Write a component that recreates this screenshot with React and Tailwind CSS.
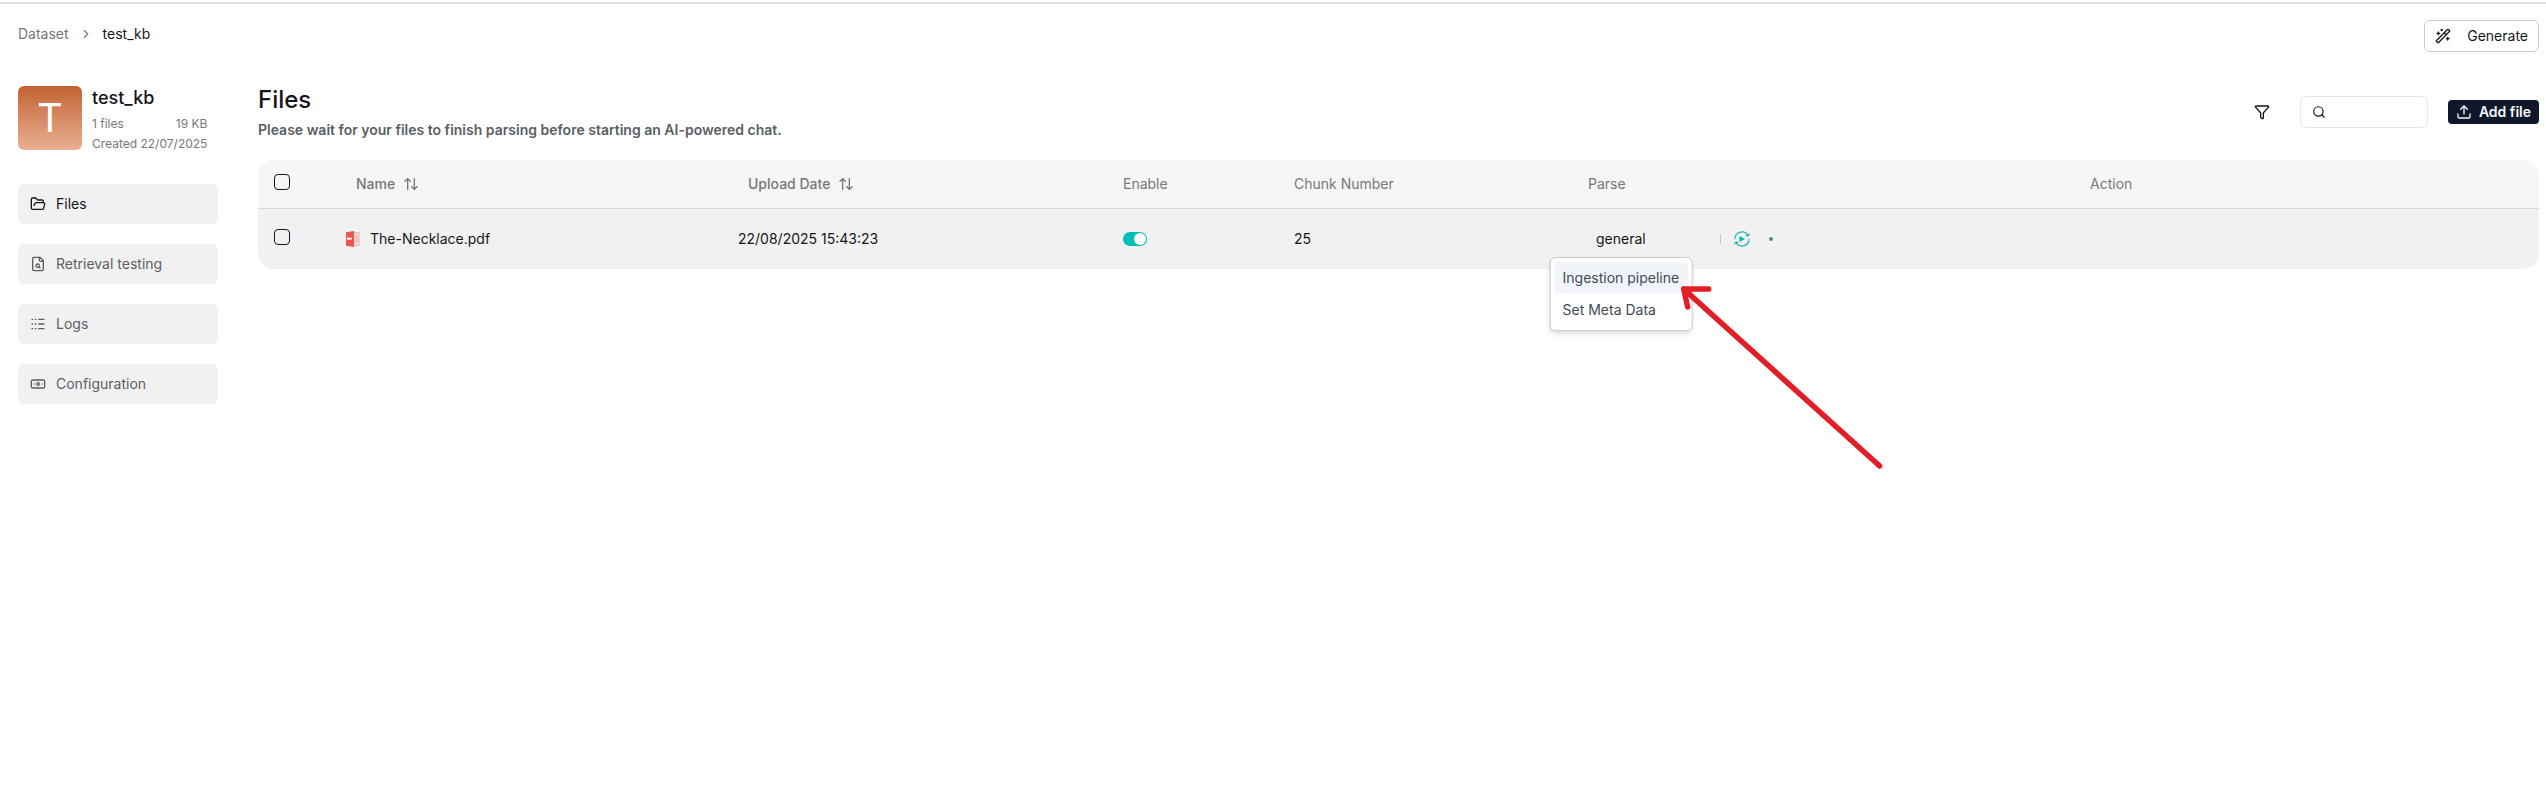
import React, { useState } from "react";
import {
  ArrowUpDown,
  Banknote,
  ChevronRight,
  FolderOpen,
  Funnel,
  Logs,
  Search,
  Upload,
  WandSparkles,
} from "lucide-react";

function FileSearchIcon({ className }) {
  return (
    <svg
      className={className}
      viewBox="0 0 24 24"
      fill="none"
      stroke="currentColor"
      strokeWidth="2"
      strokeLinecap="round"
      strokeLinejoin="round"
    >
      <path d="M15 2H6a2 2 0 0 0-2 2v16a2 2 0 0 0 2 2h12a2 2 0 0 0 2-2V7z" />
      <path d="M14 2v4a2 2 0 0 0 2 2h4" />
      <circle cx="11.5" cy="14.500" r="2.500" />
      <path d="M13.300 16.300 15 18" />
    </svg>
  );
}

const NAV = [
  { label: "Files", icon: FolderOpen, active: true },
  { label: "Retrieval testing", icon: FileSearchIcon },
  { label: "Logs", icon: Logs },
  { label: "Configuration", icon: Banknote },
];

function Checkbox({ label }) {
  return (
    <input
      type="checkbox"
      aria-label={label}
      className="block size-4 appearance-none rounded-sm border border-[#0f172a] checked:bg-[#0f172a]"
    />
  );
}

function SortHeader({ children }) {
  return (
    <button type="button" className="flex items-center gap-2 px-[10px] font-medium">
      {children}
      <ArrowUpDown className="size-4" />
    </button>
  );
}

function Toggle() {
  const [on, setOn] = useState(true);
  return (
    <label className="flex h-[14px] w-6 cursor-pointer items-center rounded-full bg-[#c4c4c4] p-px has-checked:justify-end has-checked:bg-[#00beb4]">
      <input
        type="checkbox"
        role="switch"
        aria-label="Enable"
        checked={on}
        onChange={() => setOn(!on)}
        className="size-3 appearance-none rounded-full bg-white"
      />
    </label>
  );
}

function PdfIcon() {
  return (
    <svg className="h-4 w-[14px] shrink-0" viewBox="0 0 14 16" fill="none">
      <path d="M8 1.500h5v13H8" fill="#fbdcda" stroke="#f5aeaa" />
      <path d="M9.500 5h1.500v5M9.500 10.500h2.500" stroke="#f3a5a1" />
      <path d="M0 1.200 8 0v16L0 14.800z" fill="#f0524c" />
      <path d="M1 6.500h2.500l1 .8L6 6.500v2l-1.500-.3-1 .8L1 8.300z" fill="#fff" />
    </svg>
  );
}

function ReparseIcon() {
  return (
    <svg
      className="size-4"
      viewBox="0 0 16 16"
      fill="none"
      stroke="#1fb5ad"
      strokeWidth="1.200"
      strokeLinecap="round"
      strokeLinejoin="round"
    >
      <path d="M.9 7.600A7.100 7.100 0 0 1 14.100 4.500M15.300 3.200l-1.200 1.600-1.900-.5" />
      <path d="M15.100 8.400A7.100 7.100 0 0 1 1.900 11.500M.7 12.800l1.200-1.600 1.900.5" />
      <path d="M5.500 5v6L11 8z" fill="#00b8ae" stroke="none" />
    </svg>
  );
}

function Arrow() {
  return (
    <svg
      className="pointer-events-none absolute top-full left-full -mt-12 -ml-4 h-[188px] w-[208px]"
      viewBox="0 0 208 188"
      fill="none"
      stroke="#e41e26"
      strokeWidth="5.500"
      strokeLinecap="round"
      strokeLinejoin="round"
    >
      <path d="M203 183 7 6M32 6H7l4 18" />
    </svg>
  );
}

function ParseMenu() {
  return (
    <div className="relative">
      <button type="button" className="h-7 px-2">
        general
      </button>
      <div className="absolute top-full left-1/2 z-10 mt-1 -translate-x-1/2">
        <div
          role="menu"
          className="flex flex-col rounded-md border border-[#cbcbcd] bg-white p-1 text-[#434a57] shadow-md"
        >
          <button
            type="button"
            role="menuitem"
            className="rounded-sm bg-[#f1f5f9] px-2 py-1.5 text-left whitespace-nowrap"
          >
            Ingestion pipeline
          </button>
          <button
            type="button"
            role="menuitem"
            className="rounded-sm px-2 py-1.5 text-left whitespace-nowrap"
          >
            Set Meta Data
          </button>
        </div>
        <Arrow />
      </div>
    </div>
  );
}

export default function App() {
  return (
    <div className="min-h-screen bg-white pt-[2px] font-['Inter',sans-serif] text-sm text-[#161618]">
      <div className="border-t-2 border-[#e0e0dd] pr-[7px] pl-[18px]">
        <header className="flex items-center justify-between pt-4">
          <nav aria-label="Breadcrumb" className="flex items-center gap-[10px] pb-1">
            <a href="#dataset" className="text-[#75787a]">
              Dataset
            </a>
            <ChevronRight className="size-[14px] text-[#75787a]" />
            <a href="#test_kb">test_kb</a>
          </nav>
          <button
            type="button"
            className="flex h-8 items-center gap-4 rounded-md border border-[#cbcbcd] px-[10px]"
          >
            <WandSparkles className="size-4" />
            Generate
          </button>
        </header>

        <div className="flex gap-10 pt-8">
          <aside className="w-[200px] shrink-0 pt-[2px]">
            <div className="flex gap-[10px]">
              <div className="flex size-16 shrink-0 items-center justify-center rounded-md bg-linear-to-b from-[#c2622f] to-[#eab093] text-[40px] text-white">
                T
              </div>
              <div className="text-xs leading-5 text-[#75787a]">
                <h2 className="text-lg leading-6 font-medium text-[#161618]">test_kb</h2>
                <div className="flex justify-between pt-1">
                  <span>1 files</span>
                  <span>19 KB</span>
                </div>
                <div>Created 22/07/2025</div>
              </div>
            </div>
            <nav aria-label="Dataset" className="flex flex-col gap-5 pt-[30px]">
              {NAV.map(({ label, icon: Icon, active }) => (
                <a
                  key={label}
                  href={"#" + label}
                  className={
                    active
                      ? "flex h-10 items-center gap-[10px] rounded-md bg-[#f1f1f1] px-3 text-[#161618]"
                      : "flex h-10 items-center gap-[10px] rounded-md bg-[#f1f1f1] px-3 text-[#5b5e63]"
                  }
                >
                  <Icon className="size-4" />
                  {label}
                </a>
              ))}
            </nav>
          </aside>

          <main className="min-w-0 flex-1">
            <div className="flex items-center justify-between pb-5">
              <div>
                <h1 className="text-2xl leading-8 font-medium">Files</h1>
                <p className="pt-1 font-semibold text-[#5b5e63]">
                  Please wait for your files to finish parsing before starting an AI-powered chat.
                </p>
              </div>
              <div className="flex items-center">
                <button type="button" aria-label="Filter" className="mr-[30px]">
                  <Funnel className="size-4" />
                </button>
                <label className="mr-5 flex h-8 w-32 items-center gap-2 rounded-md border border-[#e2e8f0] px-[11px]">
                  <Search className="size-[14px] shrink-0" />
                  <input type="search" aria-label="Search files" className="w-full min-w-0 outline-none" />
                </label>
                <button
                  type="button"
                  className="flex h-6 items-center gap-[7px] rounded-sm bg-[#0f172a] px-2 font-semibold text-[#f8fafc]"
                >
                  <Upload className="size-4" />
                  Add file
                </button>
              </div>
            </div>

            <table className="w-full table-fixed border-separate border-spacing-0 text-left">
              <colgroup>
                <col className="w-[72px]" />
                <col className="w-[392px]" />
                <col className="w-[385px]" />
                <col className="w-[171px]" />
                <col className="w-[294px]" />
                <col className="w-[502px]" />
                <col className="w-[465px]" />
              </colgroup>
              <thead className="text-[#75787a] [&_th]:h-[49px] [&_th]:border-b [&_th]:border-[#d6d6d6] [&_th]:bg-[#f6f6f6] [&_th]:px-4 [&_th]:font-normal">
                <tr>
                  <th className="rounded-tl-2xl pb-1">
                    <Checkbox label="Select all" />
                  </th>
                  <th>
                    <SortHeader>Name</SortHeader>
                  </th>
                  <th>
                    <SortHeader>Upload Date</SortHeader>
                  </th>
                  <th>Enable</th>
                  <th>Chunk Number</th>
                  <th>Parse</th>
                  <th className="rounded-tr-2xl">Action</th>
                </tr>
              </thead>
              <tbody className="[&_td]:h-[60px] [&_td]:bg-[#f1f1f1] [&_td]:px-4">
                <tr>
                  <td className="rounded-bl-2xl pb-1">
                    <Checkbox label="Select The-Necklace.pdf" />
                  </td>
                  <td>
                    <div className="flex items-center gap-[10px]">
                      <PdfIcon />
                      The-Necklace.pdf
                    </div>
                  </td>
                  <td>22/08/2025 15:43:23</td>
                  <td>
                    <Toggle />
                  </td>
                  <td>25</td>
                  <td>
                    <div className="flex items-center">
                      <div className="flex w-[132px]">
                        <ParseMenu />
                      </div>
                      <div className="h-[10px] w-px bg-[#c4c4c6]" />
                      <button type="button" aria-label="Parse again" className="mx-3 px-px">
                        <ReparseIcon />
                      </button>
                      <span className="ml-[6px] size-1 rounded-full bg-[#3ba05c]" />
                    </div>
                  </td>
                  <td className="rounded-br-2xl" />
                </tr>
              </tbody>
            </table>
          </main>
        </div>
      </div>
    </div>
  );
}
